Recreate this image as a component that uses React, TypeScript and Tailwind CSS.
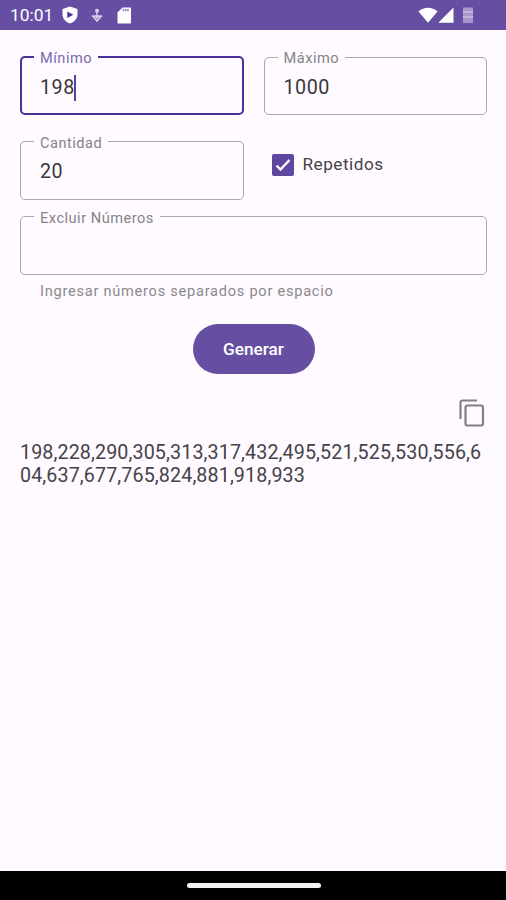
import React from "react";

interface FieldProps {
  label: string;
  value?: string;
  focused?: boolean;
  className?: string;
}

function OutlinedField({ label, value = "", focused = false, className = "" }: FieldProps) {
  return (
    <fieldset
      className={`h-[66px] min-w-0 rounded-[5px] ${
        focused ? "border-2 border-[#4b2e97] pl-3" : "border-[1.5px] border-[#a9a7ab] pl-[13px]"
      } ${className}`}
    >
      <legend
        className={`h-4 px-[6px] text-[14.6px] leading-[19px] tracking-[0.5px] ${
          focused ? "text-[#7c6ab0]" : "text-[#858387]"
        }`}
      >
        {label}
      </legend>
      <div className="flex h-[45px] items-center pl-[6px] text-[19.7px] tracking-[0.5px] text-[#39373b]">
        <span>{value}</span>
        {focused && <span className="-ml-px h-[26px] w-[2px] bg-[#5a3fa0]" />}
      </div>
    </fieldset>
  );
}

function StatusBar() {
  return (
    <header className="flex h-[30px] shrink-0 items-center bg-[#664fa3] pl-[10px] pr-[33px] text-white">
      <span className="w-[44px] whitespace-nowrap pt-[2px] text-[17.4px] leading-none">10:01</span>
      {/* Play protect shield */}
      <svg className="ml-2" width="16" height="18" viewBox="0 0 16 18">
        <path d="M8 .5 15.500 3v5.500c0 4-3 7.300-7.500 9C3.500 15.800.5 12.500.5 8.500V3z" fill="currentColor" />
        <path d="M5.300 5.500v6.500l6-3.250z" fill="#4c358b" />
      </svg>
      {/* Download anchor */}
      <svg className="ml-[13px]" width="12" height="15" viewBox="0 0 12 15" fill="none" stroke="#d8cfec" strokeWidth="1.500">
        <circle cx="6" cy="2.800" r="2" fill="#d8cfec" stroke="none" />
        <path d="M6 3v5" />
        <path d="M.8 8h10.400M2 8.500l4 4.500 4-4.500M4 8l2 2 2-2" />
      </svg>
      {/* SD card */}
      <svg className="ml-[14px]" width="15" height="17" viewBox="0 0 15 17">
        <path d="M5.500.5h7.500c.6 0 1 .4 1 1v14c0 .6-.4 1-1 1H1.500c-.6 0-1-.4-1-1V5.500z" fill="currentColor" />
        <path d="M5.500 3.200h6.500" stroke="#9b8cc4" strokeWidth="2.200" strokeDasharray="1.700 .6" />
      </svg>
      <svg className="ml-auto" width="20" height="16" viewBox="0 0 20 16">
        <path d="M.5 4.500C6-.5 14-.5 19.500 4.500L10 15.700z" fill="currentColor" />
      </svg>
      <svg width="16" height="16" viewBox="0 0 16 16">
        <path d="M15.500.5v15.300H.3z" fill="currentColor" />
      </svg>
      <svg className="ml-[9px]" width="10" height="16" viewBox="0 0 10 16">
        <path d="M0 .5h10V16H0z" fill="#a798cc" />
        <path d="M0 5h10M0 10h10" stroke="#c8bee0" strokeWidth="1.500" />
      </svg>
    </header>
  );
}

export default function App() {
  return (
    <div className="flex h-[900px] w-full flex-col overflow-hidden bg-[#fefaff] font-[Roboto,sans-serif]">
      <StatusBar />

      <main className="flex flex-1 flex-col pl-5 pr-[19px] pt-[19px]">
        <div className="grid grid-cols-2 gap-x-5 gap-y-[18.500px]">
          <OutlinedField label="Mínimo" value="198" focused />
          <OutlinedField label="Máximo" value="1000" />
          <OutlinedField label="Cantidad" value="20" />
          <label className="flex h-[62px] items-center pl-[8px]">
            <span className="flex size-[22px] items-center justify-center rounded-[2px] bg-[#5f469f]">
              <svg width="16" height="14" viewBox="0 0 16 14" fill="none" stroke="white" strokeWidth="2.400">
                <path d="m1.500 7.500 4 4L14.500 2" />
              </svg>
            </span>
            <span className="ml-[9px] pt-px text-[17.2px] tracking-[0.500px] text-[#454347]">Repetidos</span>
          </label>
        </div>

        <OutlinedField label="Excluir Números" className="mt-[9px]" />
        <p className="mt-[6px] pl-5 text-[14.6px] leading-5 tracking-[0.740px] text-[#8b898d]">
          Ingresar números separados por espacio
        </p>

        <button className="mt-[23px] h-[50px] w-[122px] self-center rounded-full bg-[#664fa3] pt-[2px] text-[17.2px] font-medium text-white">
          Generar
        </button>

        <svg className="mt-[25px] mr-[2px] self-end" width="26" height="28" viewBox="0 0 26 28" fill="none" stroke="#828084" strokeWidth="2.200">
          <path d="M1.500 20V3.500a2 2 0 0 1 2-2H18" />
          <rect x="6.500" y="6.500" width="17.500" height="20" rx="2" />
        </svg>

        <p className="mt-[14px] whitespace-nowrap text-[19.7px] leading-[23px] tracking-[0.110px] text-[#454347]">
          198,228,290,305,313,317,432,495,521,525,530,556,6
          <br />
          04,637,677,765,824,881,918,933
        </p>
      </main>

      <footer className="flex h-[29px] shrink-0 items-center justify-center bg-black pl-px">
        <div className="h-[5px] w-[134px] rounded-full bg-[#f2f2f2]" />
      </footer>
    </div>
  );
}
